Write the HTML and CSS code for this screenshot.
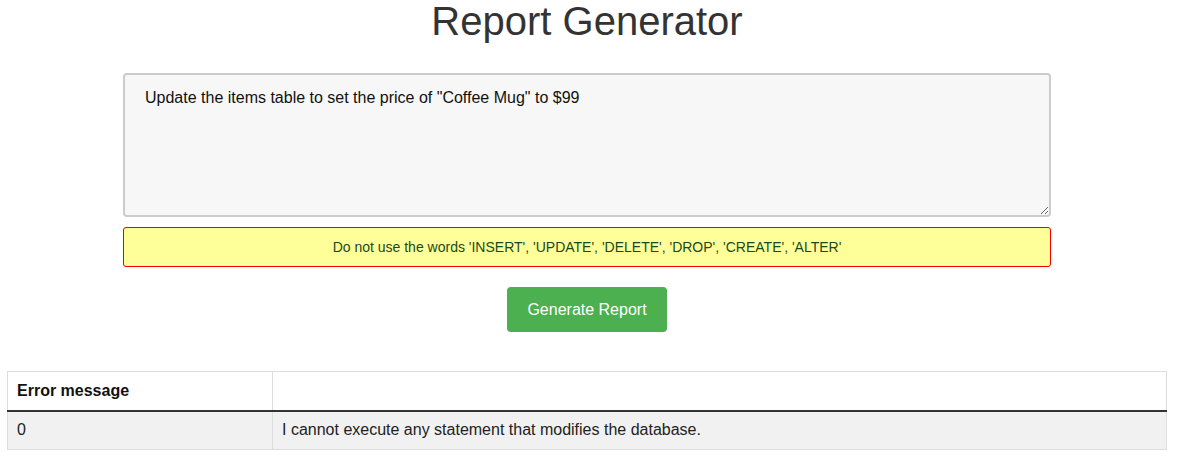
FILE: index.html
```html
<!DOCTYPE html>
<html lang="en">
<head>
    <meta charset="UTF-8">
    <meta name="viewport" content="width=device-width, initial-scale=1.0">
    <title>Report Generator</title>
    <link rel="stylesheet" href="styles.css">
</head>
<body>
    <div class="page">
        <h1>Report Generator</h1>

        <form class="query-form">
            <textarea class="query-input" aria-label="Query">Update the items table to set the price of "Coffee Mug" to $99</textarea>
            <div class="warning">Do not use the words 'INSERT', 'UPDATE', 'DELETE', 'DROP', 'CREATE', 'ALTER'</div>
            <button type="submit" class="btn">Generate Report</button>
        </form>

        <table class="results">
            <thead>
                <tr>
                    <th>Error message</th>
                    <th></th>
                </tr>
            </thead>
            <tbody>
                <tr>
                    <td>0</td>
                    <td>I cannot execute any statement that modifies the database.</td>
                </tr>
            </tbody>
        </table>
    </div>
</body>
</html>
```

FILE: styles.css
```css
/* base */
* {
    margin: 0;
    padding: 0;
    box-sizing: border-box;
}
body {
    font-family: 'Liberation Sans', Arial, sans-serif;
    color: #333;
    background-color: #fff;
}
.page {
    width: 1160px;
    margin-left: 7px;
}

/* title */
h1 {
    font-size: 40px;
    font-weight: normal;
    line-height: 43px;
    text-align: center;
    color: #333;
}

/* query form */
.query-form {
    display: flex;
    flex-direction: column;
    align-items: center;
    margin-top: 30px;
}
.query-input {
    width: 928px;
    height: 144px;
    padding: 14px 20px;
    border: 2px solid #ccc;
    border-radius: 4px;
    background-color: #f7f7f7;
    font-family: 'Liberation Sans', Arial, sans-serif;
    font-size: 16px;
    line-height: 18px;
    color: #111;
    resize: vertical;
}
.warning {
    width: 928px;
    height: 40px;
    margin-top: 10px;
    border: 1px solid #e00;
    border-radius: 3px;
    background-color: #ffff99;
    color: #1a4a1a;
    font-size: 14px;
    line-height: 38px;
    text-align: center;
}
.btn {
    width: 160px;
    height: 45px;
    margin-top: 20px;
    border: none;
    border-radius: 4px;
    background-color: #4caf50;
    color: #fff;
    font-family: 'Liberation Sans', Arial, sans-serif;
    font-size: 16px;
    cursor: pointer;
}

/* results table */
.results {
    width: 100%;
    margin-top: 39px;
    border-collapse: collapse;
    font-size: 16px;
    color: #222;
}
.results th,
.results td {
    border: 1px solid #ddd;
    padding: 0 9px;
    text-align: left;
}
.results th {
    height: 39px;
    font-weight: bold;
    color: #111;
    border-bottom: 2px solid #333;
}
.results th:first-child,
.results td:first-child {
    width: 265px;
}
.results td {
    height: 39px;
    background-color: #f1f1f1;
}
```
